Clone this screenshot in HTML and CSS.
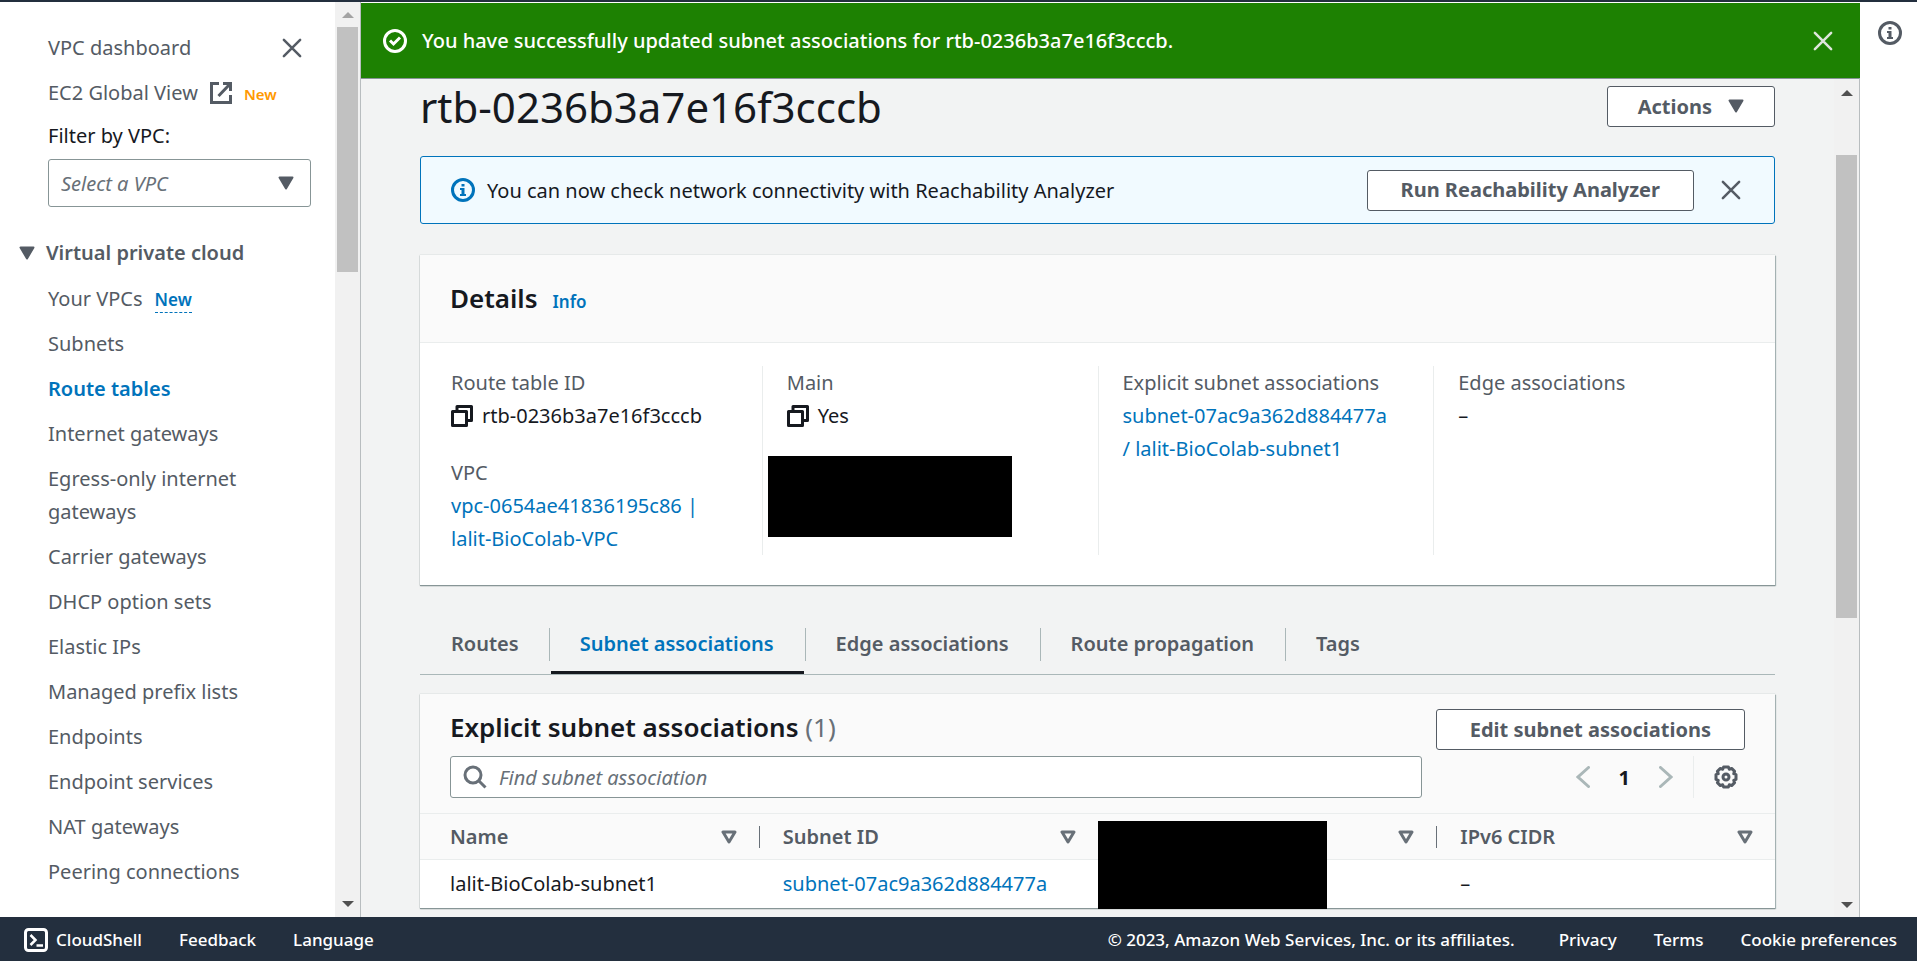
FILE: index.html
```html
<!DOCTYPE html>
<html lang="en">
<head>
<meta charset="utf-8">
<title>Route table details | VPC Console</title>
<link rel="stylesheet" href="styles.css">
</head>
<body>
<svg class="defs" aria-hidden="true">
  <symbol id="i-close" viewBox="0 0 16 16"><path d="M1.5 1.5l13 13M14.5 1.5l-13 13" fill="none" stroke="currentColor" stroke-width="2" stroke-linecap="round"/></symbol>
  <symbol id="i-caret" viewBox="0 0 16 14"><path d="M1.5 1.5h13L8 12.500z" fill="currentColor" stroke="currentColor" stroke-width="2" stroke-linejoin="round"/></symbol>
  <symbol id="i-sort" viewBox="0 0 16 14"><path d="M2 2h12L8 12z" fill="none" stroke="currentColor" stroke-width="3" stroke-linejoin="round"/></symbol>
  <symbol id="i-copy" viewBox="0 0 22 22"><path d="M1.500 6.500h14v14h-14zM6 6V1.500h14.500v14H16" fill="none" stroke="currentColor" stroke-width="3" stroke-linejoin="round"/></symbol>
  <symbol id="i-info" viewBox="0 0 24 24"><circle cx="12" cy="12" r="10.500" fill="none" stroke="currentColor" stroke-width="3"/><path d="M10.500 6h3v2.500h-3zM9 10h4.500v6H15v2H9v-2h1.500v-4H9z" fill="currentColor"/></symbol>
  <symbol id="i-ok" viewBox="0 0 24 24"><circle cx="12" cy="12" r="10.500" fill="none" stroke="currentColor" stroke-width="3"/><path d="M7 11.500l3.500 3.500L17 8.500" fill="none" stroke="currentColor" stroke-width="3"/></symbol>
  <symbol id="i-ext" viewBox="0 0 22 22"><path d="M9 1.500H1.500v19h19V13M13 1.500h7.500V9M20 2L8.500 14" fill="none" stroke="currentColor" stroke-width="3"/></symbol>
  <symbol id="i-search" viewBox="0 0 24 24"><circle cx="10" cy="10" r="8" fill="none" stroke="currentColor" stroke-width="3"/><path d="M15.500 15.500l7 7" stroke="currentColor" stroke-width="3"/></symbol>
  <symbol id="i-gear" viewBox="0 0 24 24"><path d="M9.600 2h4.800l.9 2.300 2.300-.9 3 3-.9 2.300 2.300.9v4.800l-2.300.9.9 2.300-3 3-2.300-.9-.9 2.300H9.600l-.9-2.300-2.300.9-3-3 .9-2.300L2 14.400V9.600l2.300-.9-.9-2.300 3-3 2.300.9z" fill="none" stroke="currentColor" stroke-width="3" stroke-linejoin="round"/><circle cx="12" cy="12" r="3" fill="none" stroke="currentColor" stroke-width="3"/></symbol>
  <symbol id="i-left" viewBox="0 0 14 22"><path d="M12.500 1.500L2 11l10.500 9.500" fill="none" stroke="currentColor" stroke-width="3" stroke-linecap="round"/></symbol>
  <symbol id="i-right" viewBox="0 0 14 22"><path d="M1.500 1.500L12 11 1.500 20.500" fill="none" stroke="currentColor" stroke-width="3" stroke-linecap="round"/></symbol>
  <symbol id="i-shell" viewBox="0 0 24 24"><rect x="1.500" y="1.500" width="21" height="21" rx="3" fill="none" stroke="currentColor" stroke-width="3"/><path d="M6.500 7l5 5-5 5M12.500 17.500H19" fill="none" stroke="currentColor" stroke-width="2.500"/></symbol>
  <symbol id="i-up" viewBox="0 0 12 6"><path d="M0 6l6-6 6 6z" fill="currentColor"/></symbol>
  <symbol id="i-down" viewBox="0 0 12 6"><path d="M0 0l6 6 6-6z" fill="currentColor"/></symbol>
</svg>
<div class="app">
  <div class="workspace">
    <aside class="sidebar">
      <nav class="nav" aria-label="VPC">
        <div class="nav-top">
          <a href="#">VPC dashboard</a>
          <button class="icon-btn" type="button" aria-label="Close navigation"><svg class="ico-x"><use href="#i-close"/></svg></button>
        </div>
        <div class="nav-global"><a href="#">EC2 Global View <svg class="ico-md"><use href="#i-ext"/></svg></a><span class="tag-new">New</span></div>
        <label class="filter-label" for="vpc-filter">Filter by VPC:</label>
        <div class="select-wrap">
          <select id="vpc-filter" class="select"><option>Select a VPC</option></select>
          <svg class="ico-caret select-caret"><use href="#i-caret"/></svg>
        </div>
        <button class="section" type="button"><svg class="ico-caret"><use href="#i-caret"/></svg>Virtual private cloud</button>
        <ul class="links">
          <li><a href="#">Your VPCs</a><a class="new-link" href="#">New</a></li>
          <li><a href="#">Subnets</a></li>
          <li><a class="active" href="#" aria-current="page">Route tables</a></li>
          <li><a href="#">Internet gateways</a></li>
          <li><a href="#">Egress-only internet gateways</a></li>
          <li><a href="#">Carrier gateways</a></li>
          <li><a href="#">DHCP option sets</a></li>
          <li><a href="#">Elastic IPs</a></li>
          <li><a href="#">Managed prefix lists</a></li>
          <li><a href="#">Endpoints</a></li>
          <li><a href="#">Endpoint services</a></li>
          <li><a href="#">NAT gateways</a></li>
          <li><a href="#">Peering connections</a></li>
        </ul>
      </nav>
      <div class="scrollbar side-scroll">
        <svg class="ico-arrow dim"><use href="#i-up"/></svg>
        <div class="track"><div class="thumb"></div></div>
        <svg class="ico-arrow"><use href="#i-down"/></svg>
      </div>
    </aside>

    <div class="center">
      <div class="flash" role="status">
        <svg class="ico-lg"><use href="#i-ok"/></svg>
        <span class="flash-text">You have successfully updated subnet associations for rtb-0236b3a7e16f3cccb.</span>
        <button class="icon-btn" type="button" aria-label="Dismiss"><svg class="ico-x"><use href="#i-close"/></svg></button>
      </div>
      <div class="scroller">
        <main class="content">
          <div class="title-row">
            <h1>rtb-0236b3a7e16f3cccb</h1>
            <button class="btn" type="button">Actions<svg class="ico-caret"><use href="#i-caret"/></svg></button>
          </div>

          <div class="alert">
            <svg class="ico-lg"><use href="#i-info"/></svg>
            <span class="alert-text">You can now check network connectivity with Reachability Analyzer</span>
            <button class="btn btn-wide" type="button">Run Reachability Analyzer</button>
            <button class="icon-btn" type="button" aria-label="Dismiss"><svg class="ico-x"><use href="#i-close"/></svg></button>
          </div>

          <section class="card">
            <header class="card-head"><h2>Details</h2><a class="info" href="#">Info</a></header>
            <div class="details">
              <dl>
                <dt>Route table ID</dt>
                <dd><svg class="ico-md"><use href="#i-copy"/></svg>rtb-0236b3a7e16f3cccb</dd>
                <dt>VPC</dt>
                <dd><a href="#">vpc-0654ae41836195c86 |<br>lalit-BioColab-VPC</a></dd>
              </dl>
              <dl>
                <dt>Main</dt>
                <dd><svg class="ico-md"><use href="#i-copy"/></svg>Yes</dd>
                <div class="mask mask-owner"></div>
              </dl>
              <dl>
                <dt>Explicit subnet associations</dt>
                <dd><a href="#">subnet-07ac9a362d884477a<br>/ lalit-BioColab-subnet1</a></dd>
              </dl>
              <dl>
                <dt>Edge associations</dt>
                <dd>–</dd>
              </dl>
            </div>
          </section>

          <div class="tabs" role="tablist">
            <button class="tab" type="button" role="tab">Routes</button>
            <button class="tab selected" type="button" role="tab" aria-selected="true">Subnet associations</button>
            <button class="tab" type="button" role="tab">Edge associations</button>
            <button class="tab" type="button" role="tab">Route propagation</button>
            <button class="tab" type="button" role="tab">Tags</button>
          </div>

          <section class="card">
            <header class="table-head">
              <div class="table-title">
                <h2>Explicit subnet associations <span class="count">(1)</span></h2>
                <button class="btn btn-wide" type="button">Edit subnet associations</button>
              </div>
              <div class="tools">
                <div class="search">
                  <svg class="ico-lg"><use href="#i-search"/></svg>
                  <input type="text" placeholder="Find subnet association" aria-label="Find subnet association">
                </div>
                <div class="pager">
                  <button class="icon-btn" type="button" aria-label="Previous page"><svg class="ico-chev"><use href="#i-left"/></svg></button>
                  <button class="page" type="button">1</button>
                  <button class="icon-btn" type="button" aria-label="Next page"><svg class="ico-chev"><use href="#i-right"/></svg></button>
                </div>
                <div class="prefs"><button class="icon-btn" type="button" aria-label="Preferences"><svg class="ico-lg"><use href="#i-gear"/></svg></button></div>
              </div>
            </header>
            <table class="table">
              <thead>
                <tr>
                  <th><div class="th">Name<svg class="ico-caret"><use href="#i-sort"/></svg></div></th>
                  <th><div class="th">Subnet ID<svg class="ico-caret"><use href="#i-sort"/></svg></div></th>
                  <th><div class="th"><span></span><svg class="ico-caret"><use href="#i-sort"/></svg></div><div class="mask mask-cidr"></div></th>
                  <th><div class="th">IPv6 CIDR<svg class="ico-caret"><use href="#i-sort"/></svg></div></th>
                </tr>
              </thead>
              <tbody>
                <tr><td>lalit-BioColab-subnet1</td><td><a href="#">subnet-07ac9a362d884477a</a></td><td></td><td>–</td></tr>
              </tbody>
            </table>
          </section>
        </main>
        <div class="scrollbar main-scroll">
          <svg class="ico-arrow"><use href="#i-up"/></svg>
          <div class="track"><div class="thumb"></div></div>
          <svg class="ico-arrow"><use href="#i-down"/></svg>
        </div>
      </div>
    </div>

    <aside class="rail">
      <button class="icon-btn" type="button" aria-label="Open help panel"><svg class="ico-lg"><use href="#i-info"/></svg></button>
    </aside>
  </div>

  <footer class="footer">
    <a class="shell" href="#"><svg class="ico-lg"><use href="#i-shell"/></svg>CloudShell</a>
    <a href="#">Feedback</a>
    <a href="#">Language</a>
    <span class="copyright">© 2023, Amazon Web Services, Inc. or its affiliates.</span>
    <a href="#">Privacy</a>
    <a href="#">Terms</a>
    <a href="#">Cookie preferences</a>
  </footer>
</div>
</body>
</html>
```

FILE: styles.css
```css
* { box-sizing: border-box; }

body {
  margin: 0;
  font-family: "Noto Sans", "Open Sans", sans-serif;
  font-size: 20px;
  line-height: 33px;
  color: #16191f;
  background: #fff;
}

a { color: #0073bb; text-decoration: none; }
button, input, select { font: inherit; color: inherit; }
button { margin: 0; padding: 0; border: 0; background: none; }
svg { display: block; flex: none; overflow: visible; }
h1, h2, dl, dd, ul { margin: 0; padding: 0; }

.defs { position: absolute; width: 0; height: 0; }
.ico-x { width: 20px; height: 20px; }
.ico-lg { width: 24px; height: 24px; }
.ico-md { width: 22px; height: 22px; }
.ico-caret { width: 16px; height: 14px; }
.ico-chev { width: 14px; height: 22px; }
.ico-arrow { width: 12px; height: 6px; color: #505050; }
.ico-arrow.dim { color: #a3a3a3; }
.icon-btn { display: flex; color: #545b64; }

.app { display: flex; flex-direction: column; height: 100vh; border-top: 2px solid #232f3e; }
.workspace { display: flex; flex: 1; min-height: 0; }

/* Side navigation */
.sidebar { display: flex; flex: none; width: 361px; border-right: 1px solid #b8bdbf; overflow: hidden; }
.nav { flex: 1; padding: 29px 24px 0 19px; color: #545b64; }
.nav a { color: #545b64; }
.nav-top { display: flex; justify-content: space-between; align-items: center; padding: 0 9px 0 29px; }
.nav-global { display: flex; align-items: center; gap: 12px; margin-top: 12px; padding-left: 29px; }
.nav-global a { display: flex; align-items: center; gap: 12px; }
.tag-new { padding-top: 3px; color: #ff9900; font-size: 15px; font-weight: 600; line-height: 24px; }
.filter-label { display: block; margin: 10px 0 7px 29px; color: #16191f; }
.select-wrap { position: relative; margin-left: 29px; }
.select {
  display: block;
  width: 100%;
  height: 48px;
  padding: 0 12px;
  border: 1px solid #879596;
  border-radius: 3px;
  background: #fff;
  color: #687078;
  font-style: italic;
  appearance: none;
}
.select-caret { position: absolute; right: 17px; top: 17px; pointer-events: none; }
.section { display: flex; align-items: center; gap: 11px; margin-top: 29px; font-weight: 600; }
.links { list-style: none; padding: 1px 0 0 29px; }
.links li { display: flex; align-items: baseline; margin-top: 12px; }
.links .active { color: #0073bb; font-weight: 600; }
.links .new-link { margin-left: 12px; color: #0073bb; font-size: 17px; font-weight: 600; line-height: 24px; border-bottom: 1px dashed #0073bb; }

/* Scrollbars */
.scrollbar { display: flex; flex-direction: column; align-items: center; flex: none; width: 25px; padding: 10px 0; background: #f1f1f1; }
.track { flex: 1; width: 21px; }
.thumb { background: #c1c1c1; }
.side-scroll .track { padding-top: 9px; }
.side-scroll .thumb { height: 28%; }
.main-scroll { padding-top: 11px; padding-bottom: 9px; }
.main-scroll .track { padding-top: 59px; }
.main-scroll .thumb { height: 62%; }

/* Main area */
.center { display: flex; flex: 1; flex-direction: column; min-width: 0; padding-top: 1px; }
.flash { display: flex; align-items: center; flex: none; height: 75px; padding: 0 27px 0 22px; background: #1d8102; color: #fff; font-weight: 500; }
.flash-text { flex: 1; margin-left: 15px; }
.flash .icon-btn { color: #dfe6dc; }
.scroller { display: flex; flex: 1; min-height: 0; border-top: 1px solid #879596; border-right: 1px solid #b8bdbf; background: #f2f3f3; }
.content { flex: 1; min-width: 0; padding: 7px 59px 0; overflow: hidden; }

.title-row { display: flex; justify-content: space-between; align-items: center; height: 41px; }
h1 { font-size: 42px; font-weight: 400; line-height: 54px; }
.btn {
  display: flex;
  align-items: center;
  gap: 16px;
  height: 41px;
  padding: 0 30px 1px;
  border: 1px solid #545b64;
  border-radius: 3px;
  background: #fff;
  color: #545b64;
  font-weight: 700;
}
.btn-wide { padding: 0 33px 1px; }

.alert { display: flex; align-items: center; height: 68px; margin-top: 29px; padding: 0 33px 0 30px; border: 1px solid #0073bb; border-radius: 3px; background: #f1faff; }
.alert > .ico-lg { color: #0073bb; }
.alert-text { flex: 1; margin-left: 12px; }
.alert .icon-btn { margin-left: 27px; }

.card { background: #fff; box-shadow: 0 1px 1px #879596, 1px 1px 1px #aab7b8, 0 0 1px #aab7b8; }
.card h2 { font-size: 26px; font-weight: 600; line-height: 36px; }
.card-head { display: flex; align-items: baseline; gap: 15px; height: 88px; margin-top: 31px; padding: 25px 30px 0; background: #fafafa; border-bottom: 1px solid #eaeded; }
.info { font-size: 17px; font-weight: 600; }

.details { display: grid; grid-template-columns: repeat(4, 1fr); padding: 23px 6px 30px; }
.details dl { position: relative; min-height: 189px; padding-left: 24px; border-left: 1px solid #eaeded; }
.details dl:first-child { border-left-color: transparent; }
.details dt { color: #545b64; }
.details dd { display: flex; align-items: center; gap: 9px; }
.details dd + dt { margin-top: 24px; }
.mask { position: absolute; background: #000; }
.mask-owner { left: 5px; top: 90px; width: 244px; height: 81px; }

.tabs { display: flex; height: 61px; margin: 29px 0 19px; border-bottom: 1px solid #aab7b8; }
.tab { display: flex; position: relative; align-items: center; padding: 0 31px 1px; color: #545b64; font-weight: 600; }
.tab:first-child { padding-right: 30px; }
.tab + .tab::before { content: ""; position: absolute; left: 0; top: 14px; width: 1px; height: 33px; background: #aab7b8; }
.tab.selected { color: #0073bb; }
.tab.selected::after { content: ""; position: absolute; left: 2px; right: 1px; bottom: 0; height: 3px; background: #16191f; }

.table-head { padding: 15px 30px; background: #fafafa; border-bottom: 1px solid #eaeded; }
.table-title { display: flex; justify-content: space-between; align-items: flex-start; }
.count { color: #687078; font-weight: 400; }
.tools { display: flex; align-items: center; margin-top: 6px; }
.search { display: flex; align-items: center; flex: 1; gap: 12px; height: 42px; padding: 0 12px; border: 1px solid #879596; border-radius: 3px; background: #fff; color: #687078; }
.search input { flex: 1; min-width: 0; padding: 0; border: 0; outline: 0; background: none; }
.search input::placeholder { color: #687078; font-style: italic; opacity: 1; }
.pager { display: flex; align-items: center; gap: 29px; margin-left: 154px; }
.pager .icon-btn { color: #aab7b8; }
.page { font-weight: 700; }
.prefs { display: flex; align-items: center; height: 42px; margin-left: 20px; padding: 0 7px 0 20px; border-left: 1px solid #eaeded; }

.table { width: 100%; border-collapse: collapse; table-layout: fixed; }
.table th { position: relative; padding: 0 22px 0 24px; background: #fafafa; border-bottom: 1px solid #eaeded; color: #545b64; font-weight: 600; text-align: left; }
.th { display: flex; justify-content: space-between; align-items: center; height: 45px; }
.th svg { color: #687078; }
.table th + th::before { content: ""; position: absolute; left: 0; top: 12px; width: 1px; height: 22px; background: #687078; }
.table td { height: 48px; padding: 0 24px; }
.table th:first-child, .table td:first-child { padding-left: 30px; }
.mask-cidr { left: 0; top: 7px; width: 229px; height: 88px; z-index: 1; }

.rail { flex: none; width: 57px; padding: 19px 18px; }

/* Footer */
.footer { display: flex; align-items: center; flex: none; gap: 37px; height: 44px; padding: 2px 20px 0 24px; background: #232f3e; color: #fff; font-size: 17px; font-weight: 500; line-height: 24px; }
.footer a { color: #fff; }
.footer .shell { display: flex; align-items: center; gap: 8px; }
.copyright { margin-left: auto; padding-right: 7px; }
```
